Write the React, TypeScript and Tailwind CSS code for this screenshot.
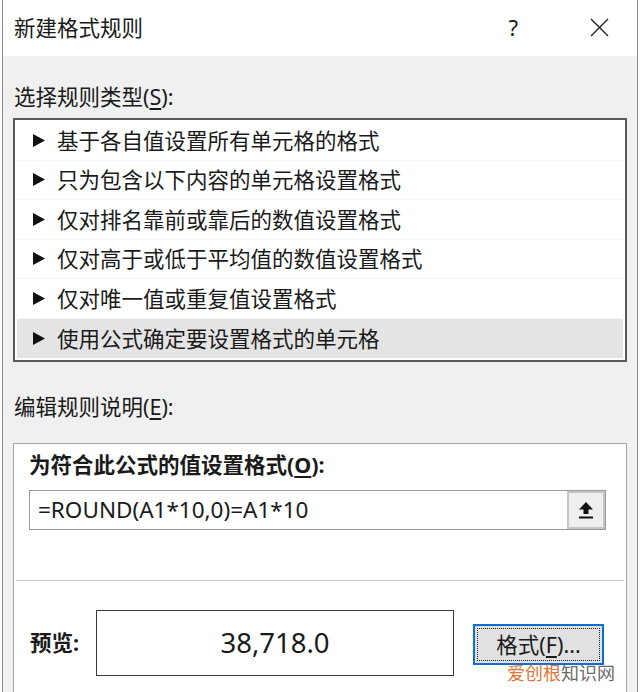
import React from "react";

const FONT = { fontFamily: '"Noto Sans", "Noto Sans CJK SC", sans-serif' };

const rules = [
  "基于各自值设置所有单元格的格式",
  "只为包含以下内容的单元格设置格式",
  "仅对排名靠前或靠后的数值设置格式",
  "仅对高于或低于平均值的数值设置格式",
  "仅对唯一值或重复值设置格式",
  "使用公式确定要设置格式的单元格",
];

function Tri() {
  return (
    <svg width="12" height="13" viewBox="0 0 12 13" className="shrink-0">
      <polygon points="0,0 12,6.5 0,13" fill="#111" />
    </svg>
  );
}

export default function App() {
  return (
    <div className="relative w-[640px] h-[692px] overflow-hidden bg-white text-[#1a1a1a]" style={FONT}>
      <div className="ml-[2px] w-[636px] h-full border-x border-[#8a8a8a] flex flex-col">
        {/* Title bar */}
        <div className="h-[56px] bg-white flex items-center pl-[11px] pr-[28px] shrink-0">
          <div className="text-[21.5px] leading-none flex-1">新建格式规则</div>
          <div className="text-[22px] leading-none mr-[72px] mb-[2px]">?</div>
          <svg width="19" height="19" viewBox="0 0 19 19" className="mb-[2px]">
            <path d="M1 1 L18 18 M18 1 L1 18" stroke="#222" strokeWidth="1.4" fill="none" />
          </svg>
        </div>

        {/* Body */}
        <div className="flex-1 bg-[#f0f0f0] px-[10px] flex flex-col">
          <div className="mt-[27px] h-[28px] leading-[28px] text-[21.5px] pl-[1px]">
            选择规则类型(<span className="underline underline-offset-[3px]">S</span>):
          </div>
          <div className="mt-[7px] h-[244px] border-2 border-[#5a5a5a] bg-white pt-[1px] px-[2px]">
            {rules.map((r, i) => (
              <div
                key={r}
                className={
                  "h-[39.5px] flex items-center pl-[16px] gap-[12px] text-[21.5px] " +
                  (i === 5 ? "bg-[#e4e4e4]" : "border-b border-[#f4f4f4]")
                }
              >
                <Tri />
                <span className="leading-none">{r}</span>
              </div>
            ))}
          </div>

          <div className="mt-[31px] h-[28px] leading-[28px] text-[21.5px] pl-[1px]">
            编辑规则说明(<span className="underline underline-offset-[3px]">E</span>):
          </div>

          <div className="mt-[22px] flex-1 border border-b-0 border-[#a6a6a6] bg-white pl-[15px] pr-[20px] pt-[7px] flex flex-col">
            <div className="h-[28px] leading-[28px] text-[21.5px] font-bold">
              为符合此公式的值设置格式(<span className="underline underline-offset-[3px]">O</span>):
            </div>
            <div className="mt-[11px] h-[40px] border border-[#9a9a9a] flex items-stretch">
              <div className="flex-1 flex items-center pl-[8px] text-[22.5px] leading-none">=ROUND(A1*10,0)=A1*10</div>
              <div className="w-[38px] border-2 border-[#c6c6c6] bg-[#efefef] flex items-center justify-center">
                <svg width="18" height="20" viewBox="0 0 18 20">
                  <path d="M9 2 L2 9.5 H6.5 V14 H11.5 V9.5 H16 Z" fill="#111" />
                  <rect x="2" y="16.5" width="14" height="2" fill="#111" />
                </svg>
              </div>
            </div>

            <div className="mt-[50px] -ml-[13px] -mr-[18px] h-px bg-[#cccccc]" />

            <div className="mt-[29px] flex items-center">
              <div className="w-[67px] text-[21.5px] font-bold leading-none pl-[1px]">预览:</div>
              <div className="w-[358px] h-[66px] border border-[#3a3a3a] bg-white flex items-center justify-center text-[27.5px] leading-none">
                38,718.0
              </div>
              <div className="ml-[19px] w-[131px] h-[41px] border-2 border-[#0a6fd0] bg-[#e1e1e1] p-[2px] mt-[3px]">
                <div className="w-full h-full border border-dotted border-[#222] flex items-center justify-center text-[21.5px] leading-none">
                  格式(<span className="underline underline-offset-[3px]">F</span>)...
                </div>
              </div>
            </div>
          </div>
        </div>
      </div>

      {/* watermark overlay */}
      <div
        className="absolute left-[507px] top-[663px] text-[18px] leading-none whitespace-nowrap"
        style={{ fontFamily: '"Noto Sans CJK SC", sans-serif' }}
      >
        <span className="text-[#e0773b]">爱创根</span>
        <span className="text-[#6a6a6a]">知识网</span>
      </div>
    </div>
  );
}
